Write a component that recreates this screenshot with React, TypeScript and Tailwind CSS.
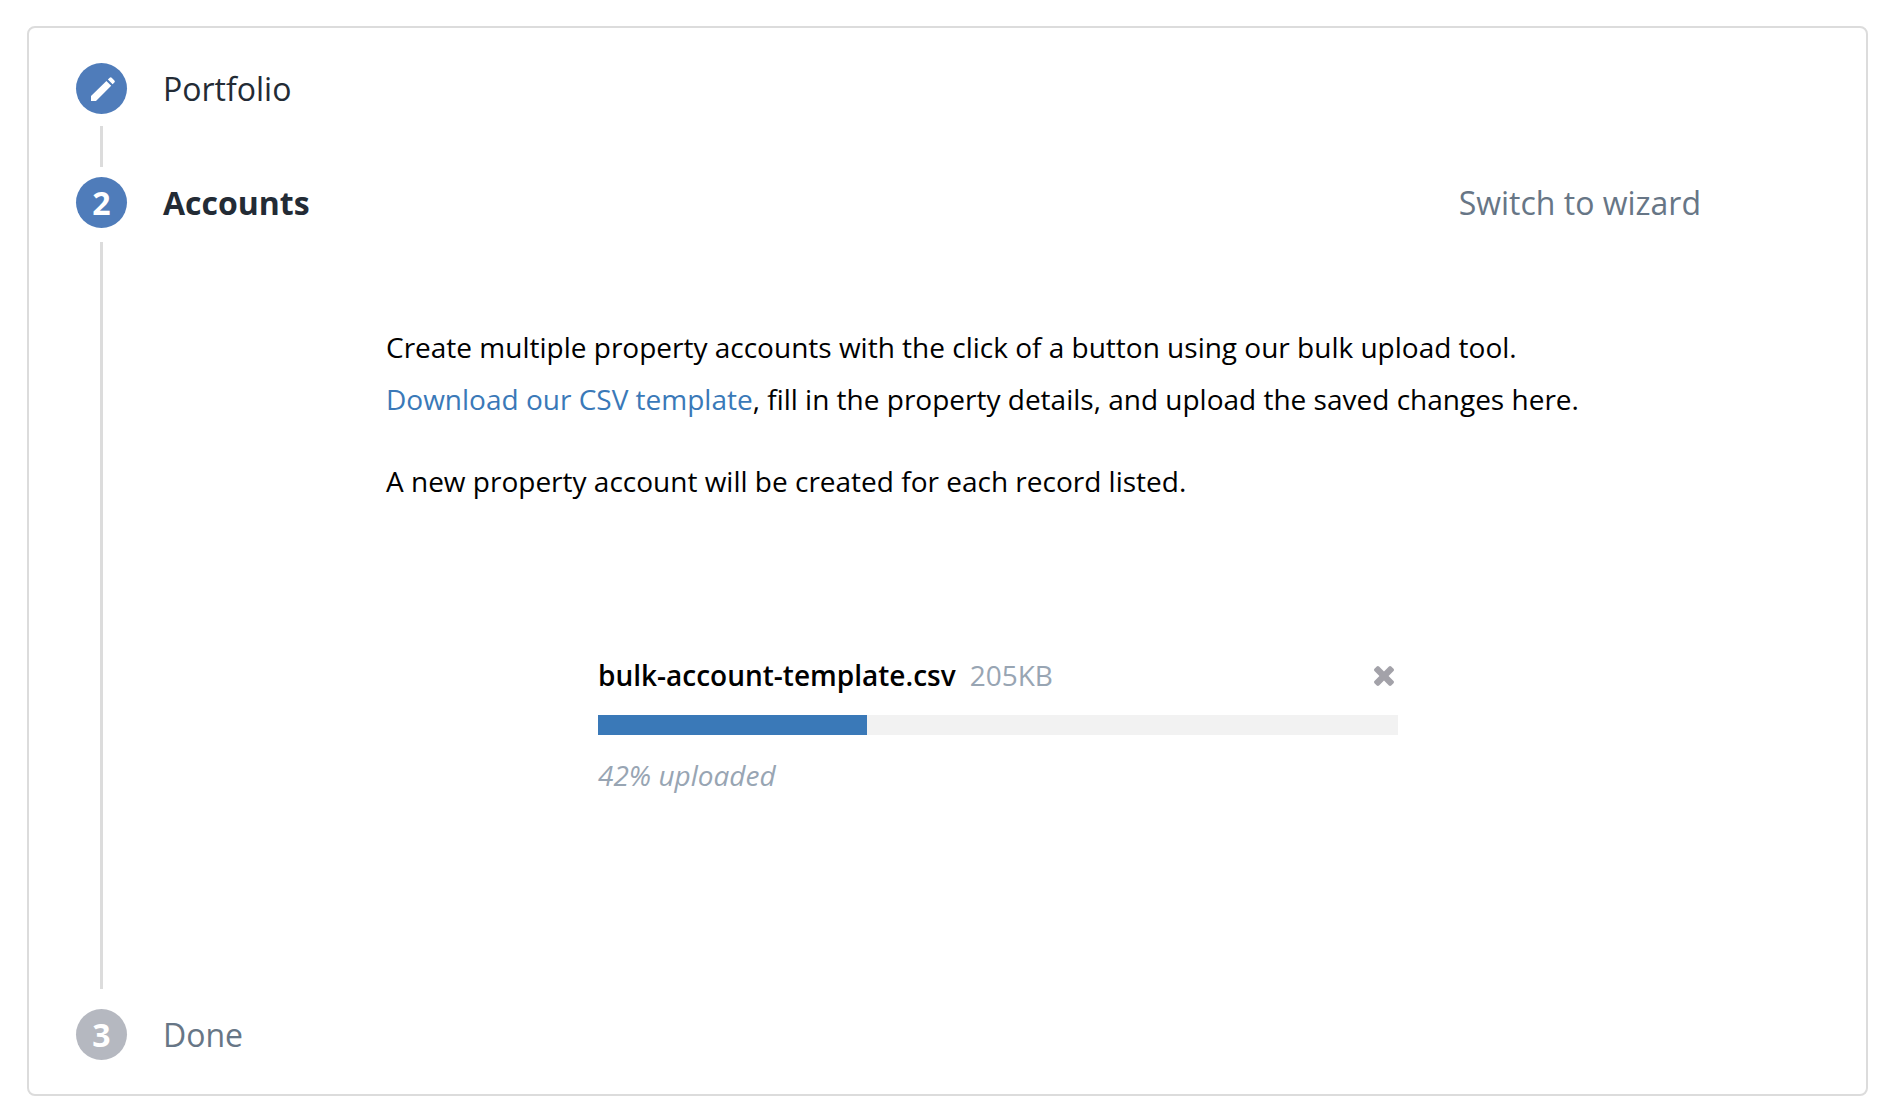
import type { ReactNode } from "react";

const UPLOAD = { file: "bulk-account-template.csv", size: "205KB", percent: 42, fill: 33.6 };

function PencilIcon() {
  return (
    <svg viewBox="-1 0 24 24" className="size-6" fill="currentColor" aria-hidden="true" overflow="visible">
      <path d="M0 19 15.4 3.9 20.2 8.7 5 24H0zM16.9 2.5 18.7.7Q19.7-.3 20.7.7L23.4 3.4Q24.4 4.4 23.4 5.4L21.6 7.3z" />
    </svg>
  );
}

function CloseIcon() {
  return (
    <svg viewBox="302 366 1188 1188" className="size-5" fill="currentColor" aria-hidden="true">
      <path d="M1490 1322q0 40-28 68l-136 136q-28 28-68 28t-68-28l-294-294-294 294q-28 28-68 28t-68-28l-136-136q-28-28-28-68t28-68l294-294-294-294q-28-28-28-68t28-68l136-136q28-28 68-28t68 28l294 294 294-294q28-28 68-28t68 28l136 136q28 28 28 68t-28 68l-294 294 294 294q28 28 28 68z" />
    </svg>
  );
}

function Badge({ muted, children }: { muted?: boolean; children: ReactNode }) {
  return (
    <span
      className={`flex size-[51px] items-center justify-center rounded-full text-[32px] leading-[51px] font-bold text-white ${
        muted ? "bg-[#b5b8c0]" : "bg-[#4f7cba]"
      }`}
    >
      {children}
    </span>
  );
}

function Upload() {
  return (
    <section className="mx-auto mt-[142px] max-w-[800px]" aria-label="File upload">
      <div className="flex items-center">
        <span className="font-semibold">{UPLOAD.file}</span>
        <span className="ml-[14px] text-[#98a5b3]">{UPLOAD.size}</span>
        <button type="button" aria-label="Cancel upload" className="mr-1 ml-auto pt-0.5 text-[#a3a2a9]">
          <CloseIcon />
        </button>
      </div>
      <div
        role="progressbar"
        aria-label={UPLOAD.file}
        aria-valuenow={UPLOAD.percent}
        aria-valuemin={0}
        aria-valuemax={100}
        className="my-[14px] h-5 bg-[#f2f2f2]"
      >
        <div className="h-full bg-[#3a79b8]" style={{ width: `${UPLOAD.fill}%` }} />
      </div>
      <p className="text-[#98a5b3] italic">{UPLOAD.percent}% uploaded</p>
    </section>
  );
}

export default function App() {
  return (
    <main className="bg-white pt-[26px] pr-5 pb-5 pl-[27px] font-['Open_Sans',sans-serif]">
      <ol className="rounded-lg border-2 border-[#dcdcdc] pt-[35px] pr-[33px] pb-[34px] pl-[47px]">
        <li className="grid grid-cols-[51px_1fr] gap-x-9">
          <Badge>
            <PencilIcon />
          </Badge>
          <h2 className="text-[32px] leading-[51px] text-[#232b35]">Portfolio</h2>
          <span className="mx-auto mt-3 mb-[10px] h-[41px] w-[3px] bg-[#dcdcdc]" />
        </li>
        <li className="grid grid-cols-[51px_1fr] gap-x-9" aria-current="step">
          <Badge>2</Badge>
          <div className="flex items-center justify-between text-[32px] leading-[51px]">
            <h2 className="font-bold text-[#232b35]">Accounts</h2>
            <button type="button" className="mr-[132px] text-[#677686]">
              Switch to wizard
            </button>
          </div>
          <span className="mx-auto mt-[14px] mb-5 w-[3px] bg-[#dcdcdc]" />
          <div className="pt-[93px] pb-[208px] text-[28px] leading-[52px] text-black">
            <div className="mx-auto max-w-[1224px]">
              <p>
                Create multiple property accounts with the click of a button using our bulk upload tool.
                <br />
                <a href="#template" className="text-[#3a79b8]">
                  Download our CSV template
                </a>
                , fill in the property details, and upload the saved changes here.
              </p>
              <p className="mt-[30px]">A new property account will be created for each record listed.</p>
            </div>
            <Upload />
          </div>
        </li>
        <li className="grid grid-cols-[51px_1fr] gap-x-9">
          <Badge muted>3</Badge>
          <h2 className="text-[32px] leading-[51px] text-[#677686]">Done</h2>
        </li>
      </ol>
    </main>
  );
}
